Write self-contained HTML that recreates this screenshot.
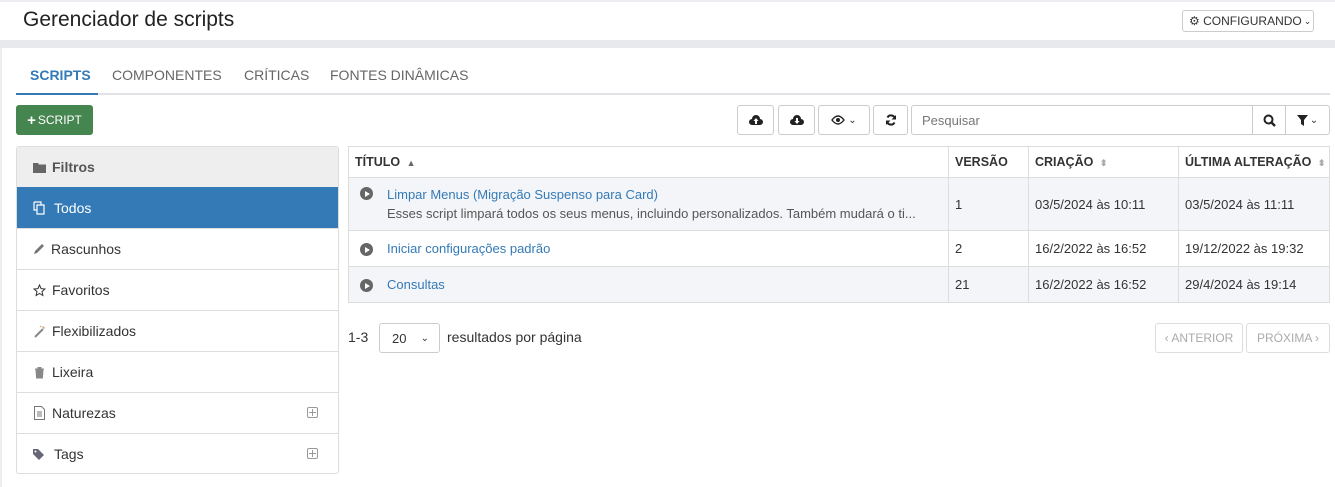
<!DOCTYPE html>
<html><head><meta charset="utf-8"><style>
*{box-sizing:border-box;margin:0;padding:0}
body{width:1335px;height:487px;overflow:hidden;background:#fff;font-family:"Liberation Sans",sans-serif;font-size:13px;color:#333;position:relative}
.a{position:absolute}
.btn{position:absolute;border:1px solid #ccc;border-radius:3px;background:#fff;display:flex;align-items:center;justify-content:center}
.side{position:absolute;left:16px;width:323px;border:1px solid #ddd;border-radius:3px}
.si{height:41px;border-top:1px solid #ddd;display:flex;align-items:center;padding-left:16px;font-size:14px;color:#333;position:relative}
.si svg{margin-right:6px}
.plus{position:absolute;right:20px;top:14px;width:11px;height:11px;border:1px solid #999;border-radius:2px}
.plus:before{content:"";position:absolute;left:4px;top:1px;width:1px;height:7px;background:#999}
.plus:after{content:"";position:absolute;left:1px;top:4px;width:7px;height:1px;background:#999}
table{position:absolute;left:348px;top:146px;width:982px;border-collapse:collapse;font-size:13px;table-layout:fixed}
td,th{border:1px solid #ddd;padding:0 6px;text-align:left;vertical-align:middle;white-space:nowrap;overflow:hidden}
th{height:31px;font-weight:bold;color:#333;font-size:12.5px}
tr.g td{background:#f4f5f8}
a{color:#337ab7;text-decoration:none}
.play{display:inline-block;width:13px;height:13px;border-radius:50%;background:#666;position:relative;vertical-align:middle}
.play:after{content:"";position:absolute;left:5px;top:3.5px;border-left:5px solid #fff;border-top:3px solid transparent;border-bottom:3px solid transparent}
.sort{color:#aaa;font-size:9px;margin-left:3px}
</style></head><body>
<div class="a" style="left:0;top:0;width:1335px;height:2px;background:#eceef1"></div>
<div class="a" style="left:23px;top:8px;font-size:21px;color:#222">Gerenciador de scripts</div>
<div class="btn" style="left:1182px;top:10px;width:132px;height:22px;font-size:12px;color:#333;justify-content:flex-start;padding-left:6px">⚙&nbsp;CONFIGURANDO<span style="font-size:9px;margin-left:2px">⌄</span></div>
<div class="a" style="left:0;top:40px;width:1335px;height:8px;background:#e8e9ed"></div>
<div class="a" style="left:0;top:48px;width:2px;height:439px;background:#eceef1"></div>
<div class="a" style="left:30px;top:67px;font-size:14px;color:#337ab7;font-weight:bold">SCRIPTS</div>
<div class="a" style="left:112px;top:67px;font-size:14px;color:#666">COMPONENTES</div>
<div class="a" style="left:244px;top:67px;font-size:14px;color:#666">CRÍTICAS</div>
<div class="a" style="left:330px;top:67px;font-size:14px;color:#666">FONTES DINÂMICAS</div>
<div class="a" style="left:16px;top:93px;width:1314px;height:2px;background:#e2e3e6"></div>
<div class="a" style="left:16px;top:93px;width:82px;height:2px;background:#337ab7"></div>
<div class="a" style="left:16px;top:105px;width:77px;height:30px;background:#45854f;border-radius:3px;color:#fff;font-size:12px;display:flex;align-items:center;justify-content:center"><b style="font-size:15px;margin-right:2px">+</b>SCRIPT</div>
<div class="btn" style="left:737px;top:105px;width:37px;height:30px"><svg width="14" height="12" viewBox="0 0 14 12"><path d="M3 11a3 3 0 0 1 0-6 4 4 0 0 1 8 0 3 3 0 0 1 0 6z" fill="#222"/><path d="M7 4l-2.5 3h1.5v3h2V7h1.5z" fill="#fff"/></svg></div>
<div class="btn" style="left:778px;top:105px;width:37px;height:30px"><svg width="14" height="12" viewBox="0 0 14 12"><path d="M3 11a3 3 0 0 1 0-6 4 4 0 0 1 8 0 3 3 0 0 1 0 6z" fill="#222"/><path d="M7 10l-2.5-3h1.5V4h2v3h1.5z" fill="#fff"/></svg></div>
<div class="btn" style="left:818px;top:105px;width:52px;height:30px"><svg width="14" height="10" viewBox="0 0 14 10"><path d="M1 5q6-8 12 0q-6 8-12 0z" fill="none" stroke="#222" stroke-width="1.4"/><circle cx="7" cy="5" r="2" fill="#222"/></svg><span style="font-size:10px;margin-left:3px">⌄</span></div>
<div class="btn" style="left:873px;top:105px;width:35px;height:30px"><svg width="12" height="12" viewBox="0 0 12 12"><path d="M10 5A4 4 0 0 0 2.5 3.5M2 7a4 4 0 0 0 7.5 1.5" fill="none" stroke="#222" stroke-width="2"/><path d="M11 1v4.5H6.5zM1 11V6.5h4.5z" fill="#222"/></svg></div>
<div class="btn" style="left:911px;top:105px;width:342px;height:30px;justify-content:flex-start;padding-left:10px;color:#777;border-radius:3px 0 0 3px">Pesquisar</div>
<div class="btn" style="left:1252px;top:105px;width:34px;height:30px;border-radius:0"><svg width="13" height="13" viewBox="0 0 13 13"><circle cx="5.5" cy="5.5" r="4" fill="none" stroke="#222" stroke-width="2"/><path d="M8.5 8.5l3.5 3.5" stroke="#222" stroke-width="2.4"/></svg></div>
<div class="btn" style="left:1285px;top:105px;width:45px;height:30px;border-radius:0 3px 3px 0"><svg width="11" height="11" viewBox="0 0 11 11"><path d="M0 0h11L7 5v6L4 9V5z" fill="#222"/></svg><span style="font-size:10px;margin-left:2px">⌄</span></div>

<div class="side" style="top:146px;height:328px">
<div class="si" style="border-top:none;background:#eee;font-weight:bold;color:#555;height:40px"><svg width="13" height="11" viewBox="0 0 13 11"><path d="M0 1h5l1 1.5h7V11H0z" fill="#666"/></svg>Filtros</div>
<div class="si" style="background:#337ab7;color:#fff;border-top-color:#337ab7;padding-left:16px"><svg width="15" height="14" viewBox="0 0 15 14"><path d="M1 1h7v3M4 4h7v9H4zM1 1v8h3" fill="none" stroke="#fff" stroke-width="1.2"/></svg>Todos</div>
<div class="si"><svg width="12" height="12" viewBox="0 0 12 12"><path d="M1 11l1-3 7-7 2 2-7 7z" fill="#777"/></svg>Rascunhos</div>
<div class="si"><svg width="13" height="13" viewBox="0 0 13 13"><path d="M6.5 1l1.6 3.6 3.9.4-3 2.6.9 3.9-3.4-2-3.4 2 .9-3.9-3-2.6 3.9-.4z" fill="none" stroke="#333" stroke-width="1"/></svg>Favoritos</div>
<div class="si"><svg width="13" height="13" viewBox="0 0 13 13"><path d="M2 12L10 4" stroke="#888" stroke-width="2"/><path d="M10 1v2M12 3h-2M7 1l1 1" stroke="#c96" stroke-width="1"/></svg>Flexibilizados</div>
<div class="si"><svg width="13" height="13" viewBox="0 0 13 13"><path d="M2 3h9M5 3V1.5h3V3M3 4h7l-.6 8H3.6z" fill="#888" stroke="#888"/></svg>Lixeira</div>
<div class="si"><svg width="13" height="14" viewBox="0 0 13 14"><path d="M1.5.5h7l3 3v10h-10z M4 6h5M4 8h5M4 10h5" fill="none" stroke="#777"/></svg>Naturezas<span class="plus"></span></div>
<div class="si"><svg width="15" height="13" viewBox="0 0 15 13"><path d="M0 1v5l6 6 5-5-6-6z" fill="#667"/><circle cx="2.5" cy="3.5" r="1" fill="#fff"/></svg>Tags<span class="plus"></span></div>
</div>

<table>
<colgroup><col style="width:600px"><col style="width:80px"><col style="width:150px"><col></colgroup>
<tr><th>TÍTULO <span class="sort" style="color:#666">▲</span></th><th>VERSÃO</th><th>CRIAÇÃO <span class="sort">⬍</span></th><th>ÚLTIMA ALTERAÇÃO <span class="sort">⬍</span></th></tr>
<tr class="g" style="height:53px"><td><span class="play" style="margin:0 14px 0 5px;vertical-align:top;margin-top:2px"></span><span style="display:inline-block;vertical-align:top;line-height:19px"><a>Limpar Menus (Migração Suspenso para Card)</a><br><span style="color:#555">Esses script limpará todos os seus menus, incluindo personalizados. Também mudará o ti...</span></span></td><td>1</td><td>03/5/2024 às 10:11</td><td>03/5/2024 às 11:11</td></tr>
<tr style="height:36px"><td><span class="play" style="margin:0 14px 0 5px"></span><a>Iniciar configurações padrão</a></td><td>2</td><td>16/2/2022 às 16:52</td><td>19/12/2022 às 19:32</td></tr>
<tr class="g" style="height:36px"><td><span class="play" style="margin:0 14px 0 5px"></span><a>Consultas</a></td><td>21</td><td>16/2/2022 às 16:52</td><td>29/4/2024 às 19:14</td></tr>
</table>

<div class="a" style="left:348px;top:329px;font-size:14px">1-3</div>
<div class="btn" style="left:379px;top:323px;width:61px;height:30px;justify-content:flex-start;padding-left:12px;font-size:13px">20<span style="position:absolute;right:10px;font-size:10px">⌄</span></div>
<div class="a" style="left:447px;top:329px;font-size:14px">resultados por página</div>
<div class="btn" style="left:1155px;top:323px;width:88px;height:30px;color:#aaa;font-size:12px;border-color:#ddd">‹ ANTERIOR</div>
<div class="btn" style="left:1246px;top:323px;width:84px;height:30px;color:#aaa;font-size:12px;border-color:#ddd">PRÓXIMA ›</div>
</body></html>
